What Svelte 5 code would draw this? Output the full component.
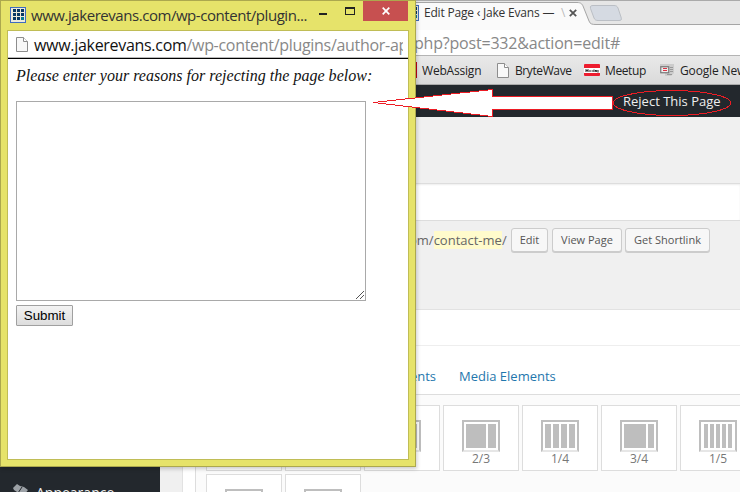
<script>
  const rows = [
    [
      { label: '1/1', bars: [30] },
      { label: '1/2', bars: [14, 14] },
      { label: '1/3', bars: [9, 8, 9] },
      { label: '2/3', bars: [20, 8] },
      { label: '1/4', bars: [6, 6, 6, 6] },
      { label: '3/4', bars: [22, 6] },
      { label: '1/5', bars: [4, 4, 4, 4, 4] }
    ],
    [{ bars: [12, 12] }, { bars: [18, 10] }]
  ];
</script>

{#snippet grid()}
  <svg class="favicon" width="16" height="16" viewBox="0 0 16 16" shape-rendering="crispEdges">
    <rect width="16" height="16" fill="#3f6cc0" />
    <rect x="1" y="1" width="14" height="14" fill="#eceadb" />
    {#each [2, 6, 10] as y}
      {#each [2, 6, 10] as x}
        <rect x={x + 1} y={y} width="3" height="3" fill={x === 10 && y === 10 ? '#087b91' : '#073763'} />
      {/each}
    {/each}
  </svg>
{/snippet}

{#snippet doc()}
  <svg class="doc" width="12" height="15" viewBox="0 0 12 15">
    <path d="M.5 .5h7l4 4v10H.5z" fill="#f8f8f8" stroke="#8d8d8d" />
    <path d="M7.5 .5v4h4" fill="#fff" stroke="#8d8d8d" />
  </svg>
{/snippet}

<div class="screen">
  <div class="tabs">
    <svg class="tabshape" width="740" height="30" viewBox="0 0 740 30">
      <rect width="740" height="25" fill="#e6e6e6" />
      <path d="M0 30V2.5H577C581 2.5 582 4 583 6L589 21C590 24 592 24.5 596 24.5H740V30z" fill="#fafafa" />
      <path d="M0 2.5H577C581 2.5 582 4 583 6L589 21C590 24 592 24.5 596 24.5H740" fill="none" stroke="#a5a5a5" />
      <path d="M593 5.5H614C616 5.5 617 6 618 8L621 17C622 20 621 20.5 619 20.5H598C596 20.5 595 20 594 18L590.500 8.500C590 6 591 5.500 593 5.500z" fill="#d5dae2" stroke="#bbbfc5" />
      <path d="M0 .5H740" stroke="#aaa" />
    </svg>
    {@render grid()}
    <span class="tabtitle">Edit Page ‹ Jake Evans — <i>\</i></span>
    <svg class="x" width="8" height="8" viewBox="0 0 8 8"><path d="M.8.8l6.400 6.400M7.200.8L.8 7.200" stroke="#555" stroke-width="1.800" /></svg>
  </div>
  <div class="omni"><span>php?post=332&amp;action=edit#</span></div>
  <div class="marks">
    <span class="red"></span><span class="wa">WebAssign</span>
    {@render doc()}<span class="bw">BryteWave</span>
    <svg class="mu" width="16" height="12" viewBox="0 0 16 12"><rect width="16" height="12" rx="1" fill="#ed1c2e" /><rect y="4" width="16" height="5" fill="#fff" /><path d="M2 8V5.500l1 1.500 1-1.500V8M5 7h2M7.500 7h2M10 5.500V8M11.500 6v1.500h1.200V6M14 6v2.500" fill="none" stroke="#222" stroke-width="1" /></svg><span class="mt">Meetup</span>
    <svg class="gn" width="14" height="12" viewBox="0 0 14 12"><path d="M0 0h14v9l-3 3H5V3H0z" fill="#ccc" /><rect x=".75" y="2.750" width="8" height="6" fill="#eee" stroke="#777" stroke-width="1.200" /><path d="M3 4.500h4M3 6.500h4" stroke="#d34" /><path d="M10 3.500h3M10 5.500h3M10 7.500h3M7 10.500h5" stroke="#999" /></svg><span class="ne">Google News</span>
  </div>
  <div class="admin"><span>Reject This Page</span></div>

  <div class="page">
    <div class="side">
      <svg width="17" height="17" viewBox="0 0 17 17"><path d="M1 4l4-4 3 2 4 1 4 3-4 5-3-1-4 5-3-2 3-5-3-2z" fill="#9ca1a6" /><path d="M6 9l4-6" stroke="#23282d" /></svg>
      <span>Appearance</span>
    </div>
    <div class="main">
      <div class="gap"></div>
      <div class="titlefield"></div>
      <div class="perma">
        <span class="slug">om/<mark>contact-me</mark>/</span>
        <span class="btn b1">Edit</span><span class="btn b2">View Page</span><span class="btn b3">Get Shortlink</span>
      </div>
      <div class="builder">
        <div class="bhead"></div>
        <div class="btabs"><span class="t1">Elements</span><span class="t2">Media Elements</span></div>
        <div class="cards">
          {#each rows as row}
            <div class="row">
              {#each row as c}
                <div class="card">
                  <div class="layout">{#each c.bars as w}<b style:width="{w}px"></b>{/each}</div>
                  {#if c.label}<span>{c.label}</span>{/if}
                </div>
              {/each}
            </div>
          {/each}
        </div>
      </div>
    </div>
  </div>

  <div class="popup">
    <div class="ptitle">
      {@render grid()}
      <span class="pt">www.jakerevans.com/wp-content/plugin...</span>
      <i class="min"></i><i class="max"></i>
      <span class="close"><svg width="8" height="8" viewBox="0 0 8 8"><path d="M.7.7l6.600 6.600M7.300.7L.7 7.300" stroke="#fff" stroke-width="1.700" /></svg></span>
    </div>
    <div class="pbody">
      <div class="addr">{@render doc()}<span class="url"><em>www.jakerevans.com</em>/wp-content/plugins/author-app</span></div>
      <div class="form">
        <p>Please enter your reasons for rejecting the page below:</p>
        <div class="area"><svg width="8" height="8" viewBox="0 0 8 8" shape-rendering="crispEdges"><path d="M0 8L8 0M4 8L8 4" stroke="#555" /></svg></div>
        <button>Submit</button>
      </div>
    </div>
  </div>

  <svg class="notes" width="740" height="130" viewBox="0 0 740 130" shape-rendering="crispEdges">
    <path d="M373.500 102.500L492.500 89.500V96.500H612.500V109.500H492.500V116.500z" fill="#fff" stroke="#ed1c24" />
    <ellipse cx="672" cy="103" rx="58.500" ry="12.500" fill="none" stroke="#ed1c24" />
  </svg>
</div>

<style>
  :global(body) { margin: 0; overflow: hidden; }
  .screen { position: relative; width: 740px; height: 492px; overflow: hidden; display: flex; flex-direction: column; font-family: "Open Sans", sans-serif; background: #f0f0f0; }
  .screen *, .screen { box-sizing: border-box; white-space: nowrap; }
  svg { display: block; flex: none; }
  .tabs { position: relative; height: 29px; flex: none; display: flex; align-items: center; padding: 0 0 4px 403px; }
  .tabshape { position: absolute; left: 0; top: 0; }
  .tabs .favicon { position: relative; }
  .tabtitle { position: relative; width: 150px; padding-left: 5px; font-size: 12px; color: #333; letter-spacing: -.2px; line-height: 16px; overflow: hidden; }
  .tabtitle i { color: #bbb; font-style: normal; padding-left: 4px; }
  .x { position: relative; }
  .omni { height: 27px; flex: none; background: #fff; border-top: 1px solid #aaa; border-bottom: 1px solid #b4b4b4; padding-left: 414px; font-size: 16px; line-height: 27px; color: #888; }
  .omni span { letter-spacing: -.2px; }
  .marks { height: 29px; flex: none; display: flex; align-items: center; background: linear-gradient(#e9e9e9, #dadada); border-bottom: 1px solid #aaa; padding-left: 401px; font-size: 12px; color: #222; }
  .marks span, .marks svg { flex: none; }
  .red { width: 16px; height: 16px; background: #c00018; margin-right: 5px; }
  .wa { width: 75px; letter-spacing: -.2px; }
  .bw { width: 75px; padding-left: 6px; letter-spacing: -.4px; }
  .mt { width: 60px; padding-left: 5px; letter-spacing: -.4px; }
  .ne { padding-left: 6px; letter-spacing: -.15px; }
  .admin { height: 32px; flex: none; background: #23282d; color: #eee; font-size: 13px; line-height: 32px; padding-left: 623px; }
  .page { flex: 1; display: flex; min-height: 0; }
  .side { width: 160px; background: #23282d; color: #eee; display: flex; align-items: flex-start; padding: 366px 0 0 12px; font-size: 14px; line-height: 20px; font-weight: 400; }
  .side span { padding-left: 7px; }
  .side svg { margin-top: 1px; }
  .main { flex: 1; min-width: 0; padding-left: 22px; }
  .gap { height: 66px; margin-left: -22px; }
  .titlefield { height: 38px; background: #fff; border: 1px solid #ddd; border-right: 0; box-shadow: inset 0 1px 2px rgba(0,0,0,.07); margin-left: -22px; }
  .perma { height: 88px; display: flex; align-items: flex-start; padding: 7px 0 0 227px; font-size: 13px; color: #666; }
  .slug { width: 102px; line-height: 24px; }
  .slug mark { background: #fffbcc; color: inherit; padding: 0; }
  .btn { height: 24px; border: 1px solid #ccc; border-radius: 3px; background: #f7f7f7; box-shadow: 0 1px 0 #ccc; text-align: center; line-height: 22px; font-size: 11px; color: #555; margin-right: 4px; }
  .b1 { width: 37px; } .b2 { width: 70px; margin-right: 3px; } .b3 { width: 85px; }
  .builder { background: #fff; border: 1px solid #e2e2e2; border-right: 0; height: 200px; }
  .bhead { height: 36px; border-bottom: 1px solid #eee; }
  .btabs { height: 48px; display: flex; padding: 18px 0 0 194px; color: #1f77ad; font-size: 13px; line-height: 24px; }
  .t1 { width: 83px; display: flex; justify-content: flex-end; padding-right: 24px; }
  .t2 { margin-left: -1px; }
  .cards { margin-left: 12px; border: 1px solid #ddd; border-right: 0; background: #fbfbfb; padding: 10px; height: 120px; display: flex; flex-direction: column; gap: 3px; overflow: hidden; }
  .row { display: flex; gap: 3px; }
  .card { flex: none; width: 76px; height: 66px; background: #fff; border: 1px solid #ddd; display: flex; flex-direction: column; align-items: center; padding-top: 14px; font-size: 12px; line-height: 14px; color: #777; }
  .layout { width: 38px; height: 32px; flex: none; border: 2px solid #bebebe; border-bottom-color: #e6e6e6; display: flex; gap: 2px; padding: 2px 0; justify-content: center; }
  .layout b { height: 24px; background: #bebebe; }
  .popup { position: absolute; left: 0; top: 0; width: 416px; height: 467px; background: #e6e36a; border: 1px solid #aca84e; padding: 0 6px 6px; display: flex; flex-direction: column; box-shadow: 1px 2px 4px rgba(0,0,0,.2); }
  .ptitle { height: 29px; flex: none; display: flex; align-items: flex-start; padding-left: 3px; }
  .ptitle .favicon { margin-top: 6px; }
  .pt { width: 292px; flex: none; padding-left: 5px; font-size: 15px; line-height: 29px; color: #333; letter-spacing: -.45px; }
  .min { width: 8px; height: 2px; flex: none; background: #222; margin: 12px 18px 0 1px; }
  .max { width: 10px; height: 8px; flex: none; border: 1px solid #222; border-top-width: 2px; margin-top: 6px; }
  .close { width: 45px; height: 20px; margin-left: 8px; background: #c75050; display: flex; align-items: center; justify-content: center; flex: none; }
  .pbody { flex: 1; border: 1px solid #c0bd56; background: #fff; }
  .addr { height: 28px; border-bottom: 1px solid #000; display: flex; align-items: center; padding-left: 8px; box-shadow: inset 0 -1px #b9b9b9; }
  .url { width: 375px; flex: none; padding-left: 6px; overflow: hidden; font-size: 16px; color: #888; line-height: 24px; letter-spacing: -.3px; }
  .url em { font-style: normal; color: #111; }
  .form { padding: 8px; display: flex; flex-direction: column; align-items: flex-start; }
  .form p { margin: 0; font: italic 16px/18px "Liberation Serif", serif; color: #111; letter-spacing: .02px; }
  .area { margin-top: 16px; width: 350px; height: 200px; border: 1px solid #a9a9a9; display: flex; align-items: flex-end; justify-content: flex-end; padding: 1px; }
  button { margin: 4px 0 0; width: 57px; height: 21px; padding: 0; border: 1px solid #a0a0a0; border-radius: 1px; background: linear-gradient(#f3f3f3, #ddd); font: 13.333px/17px "Liberation Sans", sans-serif; color: #000; }
  .notes { position: absolute; left: 0; top: 0; }
</style>
